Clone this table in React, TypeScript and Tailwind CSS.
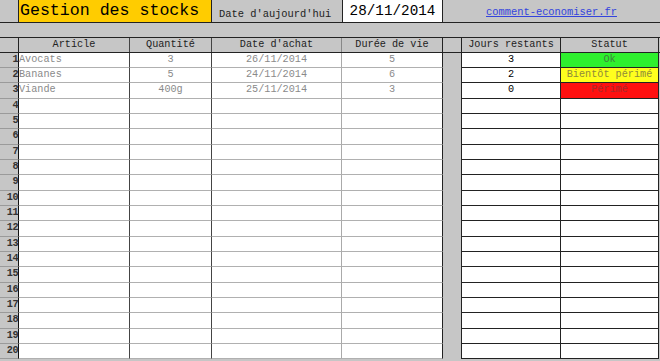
import React from 'react';

const mono = { fontFamily: '"Liberation Mono", "Courier New", monospace' };

interface Item {
  article: string;
  qty: string;
  date: string;
  life: string;
  days: string;
  status: string;
  statusClass: string;
}

const items: Item[] = [
  { article: 'Avocats', qty: '3', date: '26/11/2014', life: '5', days: '3', status: 'Ok', statusClass: 'bg-[#2ef02e] text-[#3f7f3f]' },
  { article: 'Bananes', qty: '5', date: '24/11/2014', life: '6', days: '2', status: 'Bientôt périmé', statusClass: 'bg-[#ffff1e] text-[#8f8a3a]' },
  { article: 'Viande', qty: '400g', date: '25/11/2014', life: '3', days: '0', status: 'Périmé', statusClass: 'bg-[#ff1010] text-[#a52a2a]' },
];

const rows = Array.from({ length: 20 }, (_, i) => i);

export default function App() {
  return (
    <div className="w-[660px] h-[361px] overflow-hidden bg-[#c6c6c6] text-[#222]" style={mono}>
      {/* top bar */}
      <div className="flex h-[23px] border-b border-[#222]">
        <div className="w-[19px] border-r border-[#222]" />
        <div className="w-[193px] bg-[#ffcc00] border-r border-[#222] flex items-center pl-[1px] text-[16.6px] text-black leading-none">
          Gestion des stocks
        </div>
        <div className="w-[131px] border-r border-[#222] flex items-end pb-[3px] pl-[7px] text-[10.4px] leading-none text-[#222]">
          Date d'aujourd'hui
        </div>
        <div className="w-[100px] bg-white border-r border-[#222] flex items-center justify-center text-[14.3px] leading-none text-black">
          28/11/2014
        </div>
        <div className="flex-1 flex items-center justify-center pt-[3px] text-[10.4px] leading-none">
          <span className="text-[#3344dd] underline">comment-economiser.fr</span>
        </div>
      </div>

      {/* empty band */}
      <div className="h-[15px] border-b border-[#222]" />

      {/* header row */}
      <div className="flex h-[15px] border-b border-[#222] text-[10.2px] leading-none text-[#222]">
        <div className="w-[19px] border-r border-[#222]" />
        <div className="w-[111px] border-r border-[#444] flex items-center justify-center">Article</div>
        <div className="w-[82px] border-r border-[#444] flex items-center justify-center">Quantité</div>
        <div className="w-[130px] border-r border-[#888] flex items-center justify-center">Date d'achat</div>
        <div className="w-[101px] border-r border-[#222] flex items-center justify-center">Durée de vie</div>
        <div className="w-[19px] border-r border-[#222]" />
        <div className="w-[99px] border-r border-[#222] flex items-center justify-center">Jours restants</div>
        <div className="w-[98px] border-r border-[#222] flex items-center justify-center">Statut</div>
        <div className="flex-1" />
      </div>

      {/* data rows */}
      {rows.map((i) => {
        const it = items[i];
        const h = i % 3 === 2 ? 'h-[16px]' : 'h-[15px]';
        return (
          <div key={i} className={`flex ${h} text-[10.2px] leading-none`}>
            <div className="w-[19px] border-r border-[#111] border-b border-b-[#9a9a9a] flex items-center justify-end font-bold text-[#333] tracking-[-0.5px]">
              {i + 1}
            </div>
            <div className="w-[111px] bg-white border-r border-[#444] border-b border-b-[#b0b0b0] flex items-center text-[#8a8a8a]">
              {it?.article}
            </div>
            <div className="w-[82px] bg-white border-r border-[#444] border-b border-b-[#b0b0b0] flex items-center justify-center text-[#8a8a8a]">
              {it?.qty}
            </div>
            <div className="w-[130px] bg-white border-r border-[#aaa] border-b border-b-[#b0b0b0] flex items-center justify-center text-[#8a8a8a]">
              {it?.date}
            </div>
            <div className="w-[101px] bg-white border-r border-[#222] border-b border-b-[#b0b0b0] flex items-center justify-center text-[#8a8a8a]">
              {it?.life}
            </div>
            <div className="w-[19px] border-r border-[#222]" />
            <div className="w-[99px] bg-white border-r border-[#222] border-b border-b-[#222] flex items-center justify-center text-black">
              {it?.days}
            </div>
            <div className={`w-[98px] border-r border-[#222] border-b border-b-[#222] flex items-center justify-center ${it ? it.statusClass : 'bg-white'}`}>
              {it?.status}
            </div>
            <div className="flex-1" />
          </div>
        );
      })}
    </div>
  );
}
